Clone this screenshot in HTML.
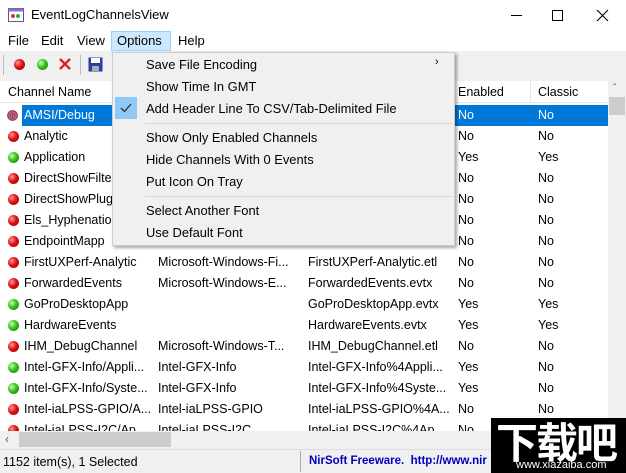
<!DOCTYPE html>
<html><head><meta charset="utf-8"><style>
*{margin:0;padding:0;box-sizing:border-box}
body{width:626px;height:473px;overflow:hidden;background:#f0f0f0;font-family:"Liberation Sans","Noto Sans CJK SC",sans-serif;font-size:12.5px;color:#000;position:relative}
.a{position:absolute;white-space:nowrap}
.title{left:0;top:0;width:626px;height:31px;background:#fff}
.menubar{left:0;top:31px;width:626px;height:20px;background:#fff}
.dot{position:absolute;width:11px;height:11px;border-radius:50%}
.r{background:radial-gradient(circle at 35% 35%,#ff9a9a,#e01010 45%,#8a0000)}
.g{background:radial-gradient(circle at 35% 35%,#c8ffb0,#34c418 45%,#1a6a08)}
.list{left:0;top:81px;width:608px;height:350px;background:#fff;overflow:hidden}
.row{position:absolute;left:0;width:608px;height:21px}
.row span{position:absolute;top:3px}
.menu{left:112px;top:52px;width:343px;height:194px;background:#f0f0f0;border:1px solid #ccc;box-shadow:2px 2px 3px rgba(0,0,0,.35);font-size:12.9px}
.menu div{position:absolute;left:33px}
.sep{position:absolute;left:32px!important;width:308px;height:1px;background:#d7d7d7}
</style></head><body>
<div class="a title"></div>
<svg class="a" style="left:8px;top:8px" width="16" height="14"><rect x="0.5" y="0.5" width="15" height="13" fill="#fff" stroke="#6a4c9c"/><rect x="0.5" y="0.5" width="15" height="3" fill="#8d6fc4"/><circle cx="5" cy="8" r="2" fill="#d33"/><circle cx="10" cy="8" r="2" fill="#3a3"/></svg>
<div class="a" style="left:31px;top:7px;font-size:13px">EventLogChannelsView</div>
<div class="a" style="left:511px;top:15px;width:11px;height:1px;background:#000"></div>
<div class="a" style="left:552px;top:10px;width:11px;height:11px;border:1px solid #000"></div>
<svg class="a" style="left:596px;top:9px" width="13" height="13"><path d="M1 1L12 12M12 1L1 12" stroke="#000" stroke-width="1.1"/></svg>
<div class="a menubar"></div>
<div class="a" style="left:8px;top:33px;font-size:13px">File</div>
<div class="a" style="left:41px;top:33px;font-size:13px">Edit</div>
<div class="a" style="left:77px;top:33px;font-size:13px">View</div>
<div class="a" style="left:111px;top:31px;width:60px;height:20px;background:#cce8ff;border:1px solid #99d1ff"></div>
<div class="a" style="left:117px;top:33px;font-size:13px">Options</div>
<div class="a" style="left:178px;top:33px;font-size:13px">Help</div>
<div class="a" style="left:3px;top:55px;width:1px;height:20px;background:#bbb"></div>
<div class="dot r" style="left:14px;top:59px"></div>
<div class="dot g" style="left:37px;top:59px"></div>
<svg class="a" style="left:58px;top:57px" width="14" height="14"><path d="M2 2L12 12M12 2L2 12" stroke="#e02020" stroke-width="2.4"/></svg>
<div class="a" style="left:80px;top:55px;width:1px;height:20px;background:#bbb"></div>
<svg class="a" style="left:88px;top:57px" width="15" height="15"><rect x="0.5" y="0.5" width="14" height="14" fill="#2c3f9a"/><rect x="3" y="1" width="9" height="5" fill="#fff"/><rect x="4" y="9" width="7" height="5" fill="#aab"/></svg>
<div class="a list">
<div class="row" style="top:0;height:22px;border-bottom:1px solid #e5e5e5">
<span style="left:8px;top:4px">Channel Name</span><span style="left:458px;top:4px">Enabled</span><span style="left:538px;top:4px">Classic</span>
<div style="position:absolute;left:530px;top:0;width:1px;height:22px;background:#e5e5e5"></div></div>
</div>
<div class="a" id="rows" style="left:0;top:105px;width:608px;height:326px;overflow:hidden">
<div class="row" style="top:0"><div style="position:absolute;left:22px;top:0;width:586px;height:21px;background:#0078d7"></div><div class="dot r" style="left:7px;top:5px;background:repeating-radial-gradient(circle,#c22 0 1px,#88a 1px 2px)"></div><span style="left:24px;color:#fff">AMSI/Debug</span><span style="left:458px;color:#fff">No</span><span style="left:538px;color:#fff">No</span></div>
<div class="row" style="top:21px"><div class="dot r" style="left:8px;top:5px"></div><span style="left:24px">Analytic</span><span style="left:458px">No</span><span style="left:538px">No</span></div>
<div class="row" style="top:42px"><div class="dot g" style="left:8px;top:5px"></div><span style="left:24px">Application</span><span style="left:458px">Yes</span><span style="left:538px">Yes</span></div>
<div class="row" style="top:63px"><div class="dot r" style="left:8px;top:5px"></div><span style="left:24px">DirectShowFilte</span><span style="left:458px">No</span><span style="left:538px">No</span></div>
<div class="row" style="top:84px"><div class="dot r" style="left:8px;top:5px"></div><span style="left:24px">DirectShowPlug</span><span style="left:458px">No</span><span style="left:538px">No</span></div>
<div class="row" style="top:105px"><div class="dot r" style="left:8px;top:5px"></div><span style="left:24px">Els_Hyphenatio</span><span style="left:458px">No</span><span style="left:538px">No</span></div>
<div class="row" style="top:126px"><div class="dot r" style="left:8px;top:5px"></div><span style="left:24px">EndpointMapp</span><span style="left:458px">No</span><span style="left:538px">No</span></div>
<div class="row" style="top:147px"><div class="dot r" style="left:8px;top:5px"></div><span style="left:24px">FirstUXPerf-Analytic</span><span style="left:158px">Microsoft-Windows-Fi...</span><span style="left:308px">FirstUXPerf-Analytic.etl</span><span style="left:458px">No</span><span style="left:538px">No</span></div>
<div class="row" style="top:168px"><div class="dot r" style="left:8px;top:5px"></div><span style="left:24px">ForwardedEvents</span><span style="left:158px">Microsoft-Windows-E...</span><span style="left:308px">ForwardedEvents.evtx</span><span style="left:458px">No</span><span style="left:538px">No</span></div>
<div class="row" style="top:189px"><div class="dot g" style="left:8px;top:5px"></div><span style="left:24px">GoProDesktopApp</span><span style="left:308px">GoProDesktopApp.evtx</span><span style="left:458px">Yes</span><span style="left:538px">Yes</span></div>
<div class="row" style="top:210px"><div class="dot g" style="left:8px;top:5px"></div><span style="left:24px">HardwareEvents</span><span style="left:308px">HardwareEvents.evtx</span><span style="left:458px">Yes</span><span style="left:538px">Yes</span></div>
<div class="row" style="top:231px"><div class="dot r" style="left:8px;top:5px"></div><span style="left:24px">IHM_DebugChannel</span><span style="left:158px">Microsoft-Windows-T...</span><span style="left:308px">IHM_DebugChannel.etl</span><span style="left:458px">No</span><span style="left:538px">No</span></div>
<div class="row" style="top:252px"><div class="dot g" style="left:8px;top:5px"></div><span style="left:24px">Intel-GFX-Info/Appli...</span><span style="left:158px">Intel-GFX-Info</span><span style="left:308px">Intel-GFX-Info%4Appli...</span><span style="left:458px">Yes</span><span style="left:538px">No</span></div>
<div class="row" style="top:273px"><div class="dot g" style="left:8px;top:5px"></div><span style="left:24px">Intel-GFX-Info/Syste...</span><span style="left:158px">Intel-GFX-Info</span><span style="left:308px">Intel-GFX-Info%4Syste...</span><span style="left:458px">Yes</span><span style="left:538px">No</span></div>
<div class="row" style="top:294px"><div class="dot r" style="left:8px;top:5px"></div><span style="left:24px">Intel-iaLPSS-GPIO/A...</span><span style="left:158px">Intel-iaLPSS-GPIO</span><span style="left:308px">Intel-iaLPSS-GPIO%4A...</span><span style="left:458px">No</span><span style="left:538px">No</span></div>
<div class="row" style="top:315px"><div class="dot r" style="left:8px;top:5px"></div><span style="left:24px">Intel-iaLPSS-I2C/Ap...</span><span style="left:158px">Intel-iaLPSS-I2C</span><span style="left:308px">Intel-iaLPSS-I2C%4Ap...</span><span style="left:458px">No</span><span style="left:538px">No</span></div>
</div>
<div class="a" style="left:0;top:431px;width:608px;height:17px;background:#f0f0f0"></div>
<div class="a" style="left:5px;top:432px;font-size:12px;color:#555">&#8249;</div>
<div class="a" style="left:19px;top:432px;width:152px;height:15px;background:#cdcdcd"></div>
<div class="a" style="left:608px;top:81px;width:18px;height:350px;background:#f0f0f0"></div>
<div class="a" style="left:609px;top:97px;width:16px;height:18px;background:#cdcdcd"></div>
<div class="a" style="left:613px;top:83px;font-size:10px;color:#555">&#710;</div>
<div class="a" style="left:0;top:449px;width:626px;height:1px;background:#ddd"></div>
<div class="a" style="left:3px;top:455px">1152 item(s), 1 Selected</div>
<div class="a" style="left:300px;top:451px;width:1px;height:21px;background:#aaa"></div>
<div class="a" style="left:309px;top:455px;color:#0000c0;font-weight:bold;font-size:11.5px">NirSoft Freeware.&nbsp; http://www.nir</div>
<div class="a" style="left:491px;top:418px;width:135px;height:55px;background:#000"></div>
<div class="a" style="left:496px;top:410px;color:#fff;font-size:42px;font-weight:bold;font-family:'Noto Sans CJK SC',sans-serif;letter-spacing:-2px">下载吧</div>
<div class="a" style="left:516px;top:459px;color:#fff;font-size:11px">www.xiazaiba.com</div>
<div class="a menu">
<div style="top:4px">Save File Encoding</div><div style="left:322px!important;top:3px;font-size:11px">&#8250;</div>
<div style="top:26px">Show Time In GMT</div>
<div style="left:2px!important;top:44px;width:22px;height:22px;background:#90c8f6"></div>
<svg style="position:absolute;left:7px;top:50px" width="12" height="10"><path d="M1 5L4.5 8.5L11 1" stroke="#333" stroke-width="1.3" fill="none"/></svg>
<div style="top:48px">Add Header Line To CSV/Tab-Delimited File</div>
<div class="sep" style="top:70px"></div>
<div style="top:77px">Show Only Enabled Channels</div>
<div style="top:99px">Hide Channels With 0 Events</div>
<div style="top:121px">Put Icon On Tray</div>
<div class="sep" style="top:143px"></div>
<div style="top:150px">Select Another Font</div>
<div style="top:172px">Use Default Font</div>
</div>
</body></html>
